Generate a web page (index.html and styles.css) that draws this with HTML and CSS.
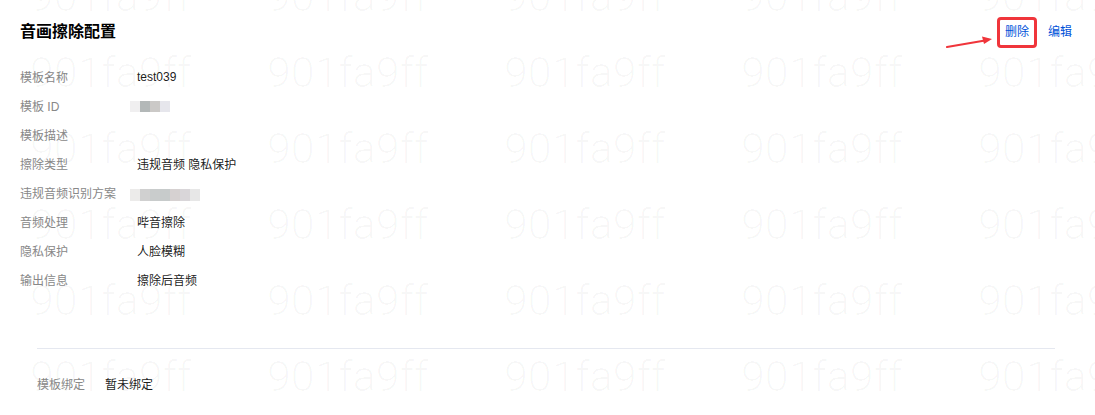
FILE: index.html
```html
<!DOCTYPE html>
<html lang="zh-CN">
<head>
<meta charset="utf-8">
<title>音画擦除配置</title>
<link rel="stylesheet" href="styles.css">
</head>
<body>
<div class="page">
  <header class="head">
    <h1 class="title">音画擦除配置</h1>
    <div class="actions">
      <a class="link link-marked">删除</a>
      <a class="link">编辑</a>
    </div>
  </header>

  <dl class="info">
    <div class="row"><dt>模板名称</dt><dd>test039</dd></div>
    <div class="row"><dt>模板 ID</dt><dd><span class="blur blur-id"><i class="b1"></i><i class="b2"></i><i class="b3"></i><i class="b4"></i></span></dd></div>
    <div class="row"><dt>模板描述</dt><dd></dd></div>
    <div class="row"><dt>擦除类型</dt><dd>违规音频&nbsp;隐私保护</dd></div>
    <div class="row"><dt>违规音频识别方案</dt><dd><span class="blur blur-plan"><i class="c1"></i><i class="c2"></i><i class="c3"></i><i class="c4"></i><i class="c5"></i><i class="c6"></i><i class="c7"></i></span></dd></div>
    <div class="row"><dt>音频处理</dt><dd>哔音擦除</dd></div>
    <div class="row"><dt>隐私保护</dt><dd>人脸模糊</dd></div>
    <div class="row"><dt>输出信息</dt><dd>擦除后音频</dd></div>
  </dl>

  <section class="bind">
    <span class="bind-label">模板绑定</span>
    <span class="bind-value">暂未绑定</span>
  </section>

  <svg class="arrow" width="60" height="20" viewBox="0 0 60 20">
    <path d="M2 16 L40 9.5" stroke="#f0353b" stroke-width="2" fill="none" stroke-linecap="round"/>
    <path d="M47 8 L37 5.5 L39 13 Z" fill="#f0353b"/>
  </svg>

  <div class="watermark" aria-hidden="true">
    <span>901fa9ff</span><span>901fa9ff</span><span>901fa9ff</span><span>901fa9ff</span><span>901fa9ff</span>
    <span>901fa9ff</span><span>901fa9ff</span><span>901fa9ff</span><span>901fa9ff</span><span>901fa9ff</span>
    <span>901fa9ff</span><span>901fa9ff</span><span>901fa9ff</span><span>901fa9ff</span><span>901fa9ff</span>
    <span>901fa9ff</span><span>901fa9ff</span><span>901fa9ff</span><span>901fa9ff</span><span>901fa9ff</span>
    <span>901fa9ff</span><span>901fa9ff</span><span>901fa9ff</span><span>901fa9ff</span><span>901fa9ff</span>
    <span>901fa9ff</span><span>901fa9ff</span><span>901fa9ff</span><span>901fa9ff</span><span>901fa9ff</span>
  </div>
</div>
</body>
</html>
```

FILE: styles.css
```css
html, body {
  margin: 0;
  padding: 0;
  background: #ffffff;
  overflow: hidden;
}

.page {
  position: relative;
  height: 415px;
  overflow: hidden;
  box-sizing: border-box;
  padding: 20px 23px 0 20px;
  font-family: "Liberation Sans", "Noto Sans CJK SC", sans-serif;
  font-size: 12px;
  color: rgba(0, 0, 0, 0.9);
}

.head {
  display: flex;
  justify-content: space-between;
  align-items: center;
  height: 24px;
}

.title {
  margin: 0;
  font-size: 16px;
  line-height: 24px;
  font-weight: bold;
  color: #000;
}

.actions {
  display: flex;
  align-items: center;
  gap: 11px;
}

.link {
  color: #0052d9;
  line-height: 13px;
  cursor: pointer;
}

.link-marked {
  padding: 6px 5px;
  border: 3px solid #f0353b;
  border-radius: 4px;
}

.info {
  margin: 18px 0 0 0;
  padding: 0;
}

.row {
  display: flex;
  align-items: center;
  height: 29px;
}

.row dt {
  width: 117px;
  flex: none;
  color: #888888;
}

.row dd {
  margin: 0;
  color: rgba(0, 0, 0, 0.9);
}

.blur {
  display: flex;
}

.blur i {
  display: block;
  width: 10px;
  height: 11px;
}

.blur-id {
  margin-left: -7px;
  margin-top: 1px;
}

.b1 { background: #f0eff0; }
.b2 { background: #b3b8b8; }
.b3 { background: #cbc9c7; }
.b4 { background: #e6e6ec; }

.blur-plan {
  margin-left: -7px;
  margin-top: 4px;
}

.blur-plan i { height: 12px; }

.c1 { background: #ecebea; }
.c2 { background: #d0d0d0; }
.c3 { background: #c9cccc; }
.c4 { background: #c7cbcb; }
.c5 { background: #d6d1d1; }
.c6 { background: #d9d6d9; }
.c7 { background: #e7e7e7; }

.bind {
  display: flex;
  align-items: center;
  margin: 54px 17px 0 17px;
  padding-top: 26px;
  border-top: 1px solid #e5e8f0;
}

.bind-label {
  width: 68px;
  color: #888888;
}

.bind-value {
  color: rgba(0, 0, 0, 0.9);
}

.arrow {
  position: absolute;
  left: 945px;
  top: 31px;
}

.watermark {
  position: absolute;
  left: 30px;
  top: -25px;
  display: grid;
  grid-template-columns: repeat(5, 237px);
  grid-auto-rows: 76px;
  pointer-events: none;
  font-family: "Roboto", "Liberation Sans", sans-serif;
  font-weight: 300;
  font-size: 43px;
  line-height: 1;
  color: rgba(0, 0, 0, 0.03);
  white-space: nowrap;
}
```
